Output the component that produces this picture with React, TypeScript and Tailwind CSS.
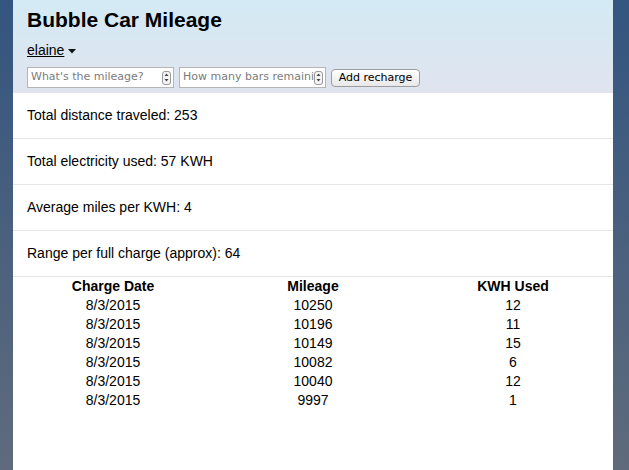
import React from "react";

const stats = [
  "Total distance traveled: 253",
  "Total electricity used: 57 KWH",
  "Average miles per KWH: 4",
  "Range per full charge (approx): 64",
];

const charges = [
  { date: "8/3/2015", mileage: 10250, kwh: 12 },
  { date: "8/3/2015", mileage: 10196, kwh: 11 },
  { date: "8/3/2015", mileage: 10149, kwh: 15 },
  { date: "8/3/2015", mileage: 10082, kwh: 6 },
  { date: "8/3/2015", mileage: 10040, kwh: 12 },
  { date: "8/3/2015", mileage: 9997, kwh: 1 },
];

function NumberField({ placeholder }: { placeholder: string }) {
  return (
    <div className="flex h-[21px] w-[147px] items-center border border-[#b5b5b5] bg-white pl-[3px] pr-[2px]">
      <input
        placeholder={placeholder}
        className="min-w-0 flex-1 bg-transparent text-[11px] text-black outline-none placeholder:text-[#7b7b7b] font-['DejaVu_Sans',sans-serif]"
      />
      <span className="flex h-[14px] w-[9px] flex-col items-center justify-center rounded-[3px] border border-[#9a9a9a] bg-[#f4f4f4]">
        <svg width="5" height="9" viewBox="0 0 5 9">
          <path d="M2.5 0.5 L4.5 3 L0.5 3 Z" fill="#444" />
          <path d="M2.5 8.5 L4.5 6 L0.5 6 Z" fill="#444" />
        </svg>
      </span>
    </div>
  );
}

export default function App() {
  return (
    <div className="min-h-[470px] bg-gradient-to-b from-[#33557f] to-[#5f6b7c] font-['Liberation_Sans',Arial,sans-serif]">
      <div className="mx-[13px] mr-[16px] min-h-[470px] bg-white">
        <header className="h-[93px] bg-gradient-to-b from-[#d3eaf4] to-[#e0e4ef] px-[14px] pt-[7px]">
          <h1 className="text-[21px] font-bold leading-[26px] text-black">
            Bubble Car Mileage
          </h1>
          <div className="mt-[9px] flex items-center gap-[4px] text-[14px] leading-[16px] text-black underline">
            <span>elaine</span>
            <svg width="8" height="5" viewBox="0 0 8 5" className="mt-[2px]">
              <path d="M0 0 L8 0 L4 4.5 Z" fill="#111" />
            </svg>
          </div>
          <div className="mt-[9px] flex items-center gap-[5px]">
            <NumberField placeholder="What's the mileage?" />
            <NumberField placeholder="How many bars remaining?" />
            <button className="h-[18px] w-[89px] rounded-[4px] border border-[#9d9d9d] bg-gradient-to-b from-white to-[#e8e8e8] text-[11px] leading-[14px] text-black font-['DejaVu_Sans',sans-serif]">
              Add recharge
            </button>
          </div>
        </header>

        <div>
          {stats.map((s) => (
            <div
              key={s}
              className="flex h-[46px] items-center border-b border-[#e6e6e6] px-[14px] pb-[1px] text-[14px] text-black"
            >
              {s}
            </div>
          ))}
        </div>

        <table className="w-full table-fixed text-center text-[14px] leading-[19px] text-black">
          <thead>
            <tr>
              <th className="font-bold">Charge Date</th>
              <th className="font-bold">Mileage</th>
              <th className="font-bold">KWH Used</th>
            </tr>
          </thead>
          <tbody>
            {charges.map((c, i) => (
              <tr key={i}>
                <td>{c.date}</td>
                <td>{c.mileage}</td>
                <td>{c.kwh}</td>
              </tr>
            ))}
          </tbody>
        </table>
      </div>
    </div>
  );
}
